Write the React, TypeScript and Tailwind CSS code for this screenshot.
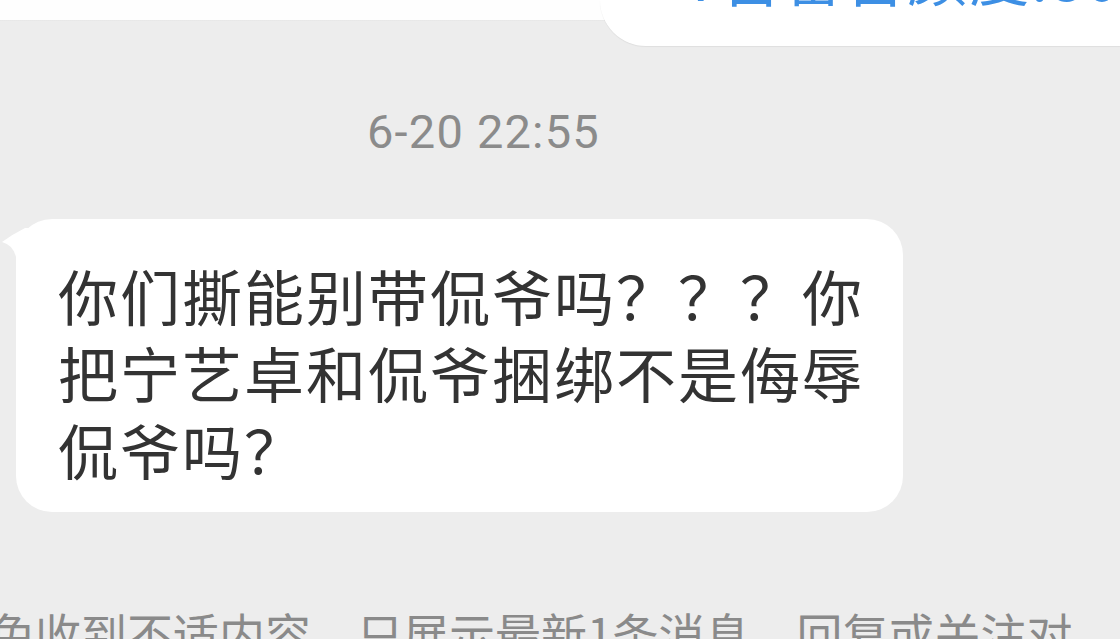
import React from "react";

export default function App() {
  const cjk = { fontFamily: '"Noto Sans CJK SC", "Noto Sans", sans-serif' };
  return (
    <div className="w-[1120px] h-[639px] overflow-hidden bg-[#ededed] flex flex-col" style={cjk}>
      {/* previous message bubble (cut at top) */}
      <div className="h-[46px] flex justify-end bg-[linear-gradient(to_bottom,#fefefe_0px,#fefefe_20px,#e4e4e4_20px,#ededed_21px)]">
        <div className="w-[520px] h-[46px] bg-white rounded-bl-[60px] shadow-[0_1px_1px_rgba(0,0,0,0.06)] flex flex-col justify-end pb-[33px] pl-[86px]">
          <div className="text-[60px] leading-[77px] tracking-[2px] text-[#3d8fe4] whitespace-nowrap">
            7吉番吉颜度:80
          </div>
        </div>
      </div>

      {/* timestamp */}
      <div className="mt-[62px] pl-[367px]">
        <div
          className="text-[47px] leading-[48px] tracking-[1.2px] text-[#8b8b8b]"
          style={{ fontFamily: 'Roboto, "Noto Sans", sans-serif' }}
        >
          6-20 22:55
        </div>
      </div>

      {/* incoming message */}
      <div className="mt-[63px] pl-[16px]">
        <div className="relative w-[887px] bg-white rounded-[36px] pl-[42px] pr-[35px] pt-[37px] pb-[25px]">
          <svg
            className="absolute left-[-15px] top-[7px]"
            width="31"
            height="37"
            viewBox="0 0 31 37"
          >
            <path d="M24 2 Q 12 8 1 16 Q 12 19 15 31 L 15 37 L 31 37 L 31 2 Z" fill="#ffffff" />
          </svg>
          <div className="text-[60px] leading-[77px] tracking-[2px] text-[#333333]">
            你们撕能别带侃爷吗？？？你把宁艺卓和侃爷捆绑不是侮辱侃爷吗？
          </div>
        </div>
      </div>

      {/* system notice */}
      <div className="mt-[94px] ml-[-11px]">
        <div className="text-[46px] leading-[52px] text-[#8a8a8a] whitespace-nowrap">
          免收到不适内容，只展示最新1条消息，回复或关注对
        </div>
      </div>
    </div>
  );
}
